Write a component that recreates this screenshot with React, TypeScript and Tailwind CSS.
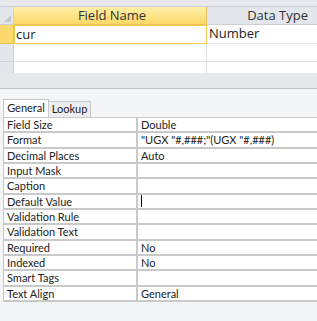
import React from "react";

const props: [string, string][] = [
  ["Field Size", "Double"],
  ["Format", "\"UGX \"#,###;\"(UGX \"#,###)"],
  ["Decimal Places", "Auto"],
  ["Input Mask", ""],
  ["Caption", ""],
  ["Default Value", ""],
  ["Validation Rule", ""],
  ["Validation Text", ""],
  ["Required", "No"],
  ["Indexed", "No"],
  ["Smart Tags", ""],
  ["Text Align", "General"],
];

const App = () => {
  return (
    <div
      className="w-[317px] h-[321px] overflow-hidden bg-[#f4f5f7] text-[#222]"
      style={{ fontFamily: '"Open Sans", "Noto Sans", sans-serif' }}
    >
      {/* design grid */}
      <div className="h-[7px] bg-[#e6e8eb] border-b border-[#c9ccd1]" />
      <div className="grid grid-cols-[14px_193px_1fr] text-[13px]">
        {/* header */}
        <div className="h-[18px] bg-[#e3e6ea] border-r border-b border-[#cdd1d6] relative">
          <div className="absolute right-[2px] bottom-[2px] w-0 h-0 border-l-[7px] border-l-transparent border-b-[7px] border-b-[#c3c8ce]" />
        </div>
        <div className="h-[18px] bg-gradient-to-b from-[#fff0a6] to-[#fcd767] border-r border-b border-[#e8c25a] flex items-center justify-center pl-[4px] text-[#333]">
          Field Name
        </div>
        <div className="h-[18px] bg-[#e3e6ea] border-b border-[#cdd1d6] flex items-center justify-end pr-[9px] text-[#333]">
          Data Type
        </div>

        {/* row 1 */}
        <div className="h-[19px] bg-[#fcd96d] border-r border-b border-[#e6c35e]" />
        <div className="h-[19px] bg-white border border-[#f0c94e] flex items-center pl-[1px]">cur</div>
        <div className="h-[19px] bg-white border-b border-[#dfe2e6] flex items-center pl-[2px]">Number</div>

        {/* row 2 */}
        <div className="h-[18px] bg-[#e3e6ea] border-r border-b border-[#cdd1d6]" />
        <div className="h-[18px] bg-white border-r border-b border-[#dfe2e6]" />
        <div className="h-[18px] bg-white border-b border-[#dfe2e6]" />

        {/* row 3 (cut) */}
        <div className="h-[11px] bg-[#e3e6ea] border-r border-[#cdd1d6]" />
        <div className="h-[11px] bg-white border-r border-[#dfe2e6]" />
        <div className="h-[11px] bg-white" />
      </div>
      <div className="h-[16px] bg-[#e6e8eb] border-b border-[#bfc3c9]" />

      {/* property sheet */}
      <div
        className="pl-[3px] pt-[10px] text-[11px]"
        style={{ fontFamily: 'Lato, "Open Sans", sans-serif' }}
      >
        <div className="flex items-end h-[18px]">
          <div className="h-[18px] w-[46px] bg-white border border-b-0 border-[#c7c9cc] flex items-center justify-center text-[#222]">
            General
          </div>
          <div className="h-[16px] w-[42px] bg-[#eceef1] border border-l-0 border-b-0 border-[#c7c9cc] flex items-center justify-center text-[#222]">
            Lookup
          </div>
        </div>
        <div className="border-t border-l border-[#c7c7c7] bg-[#c9c9c9]">
          {props.map(([label, value]) => (
            <div key={label} className="grid grid-cols-[134px_1fr] h-[15.33px] border-b-[2px] border-[#c9c9c9]">
              <div className="bg-white flex items-center pl-[3px] border-r-[2px] border-[#c9c9c9] leading-none">
                {label}
              </div>
              <div className="bg-white flex items-center pl-[3px] leading-none whitespace-nowrap overflow-hidden">
                {label === "Default Value" ? (
                  <span className="inline-block w-px h-[12px] bg-black" />
                ) : (
                  value
                )}
              </div>
            </div>
          ))}
        </div>
      </div>
    </div>
  );
};

export default App;
